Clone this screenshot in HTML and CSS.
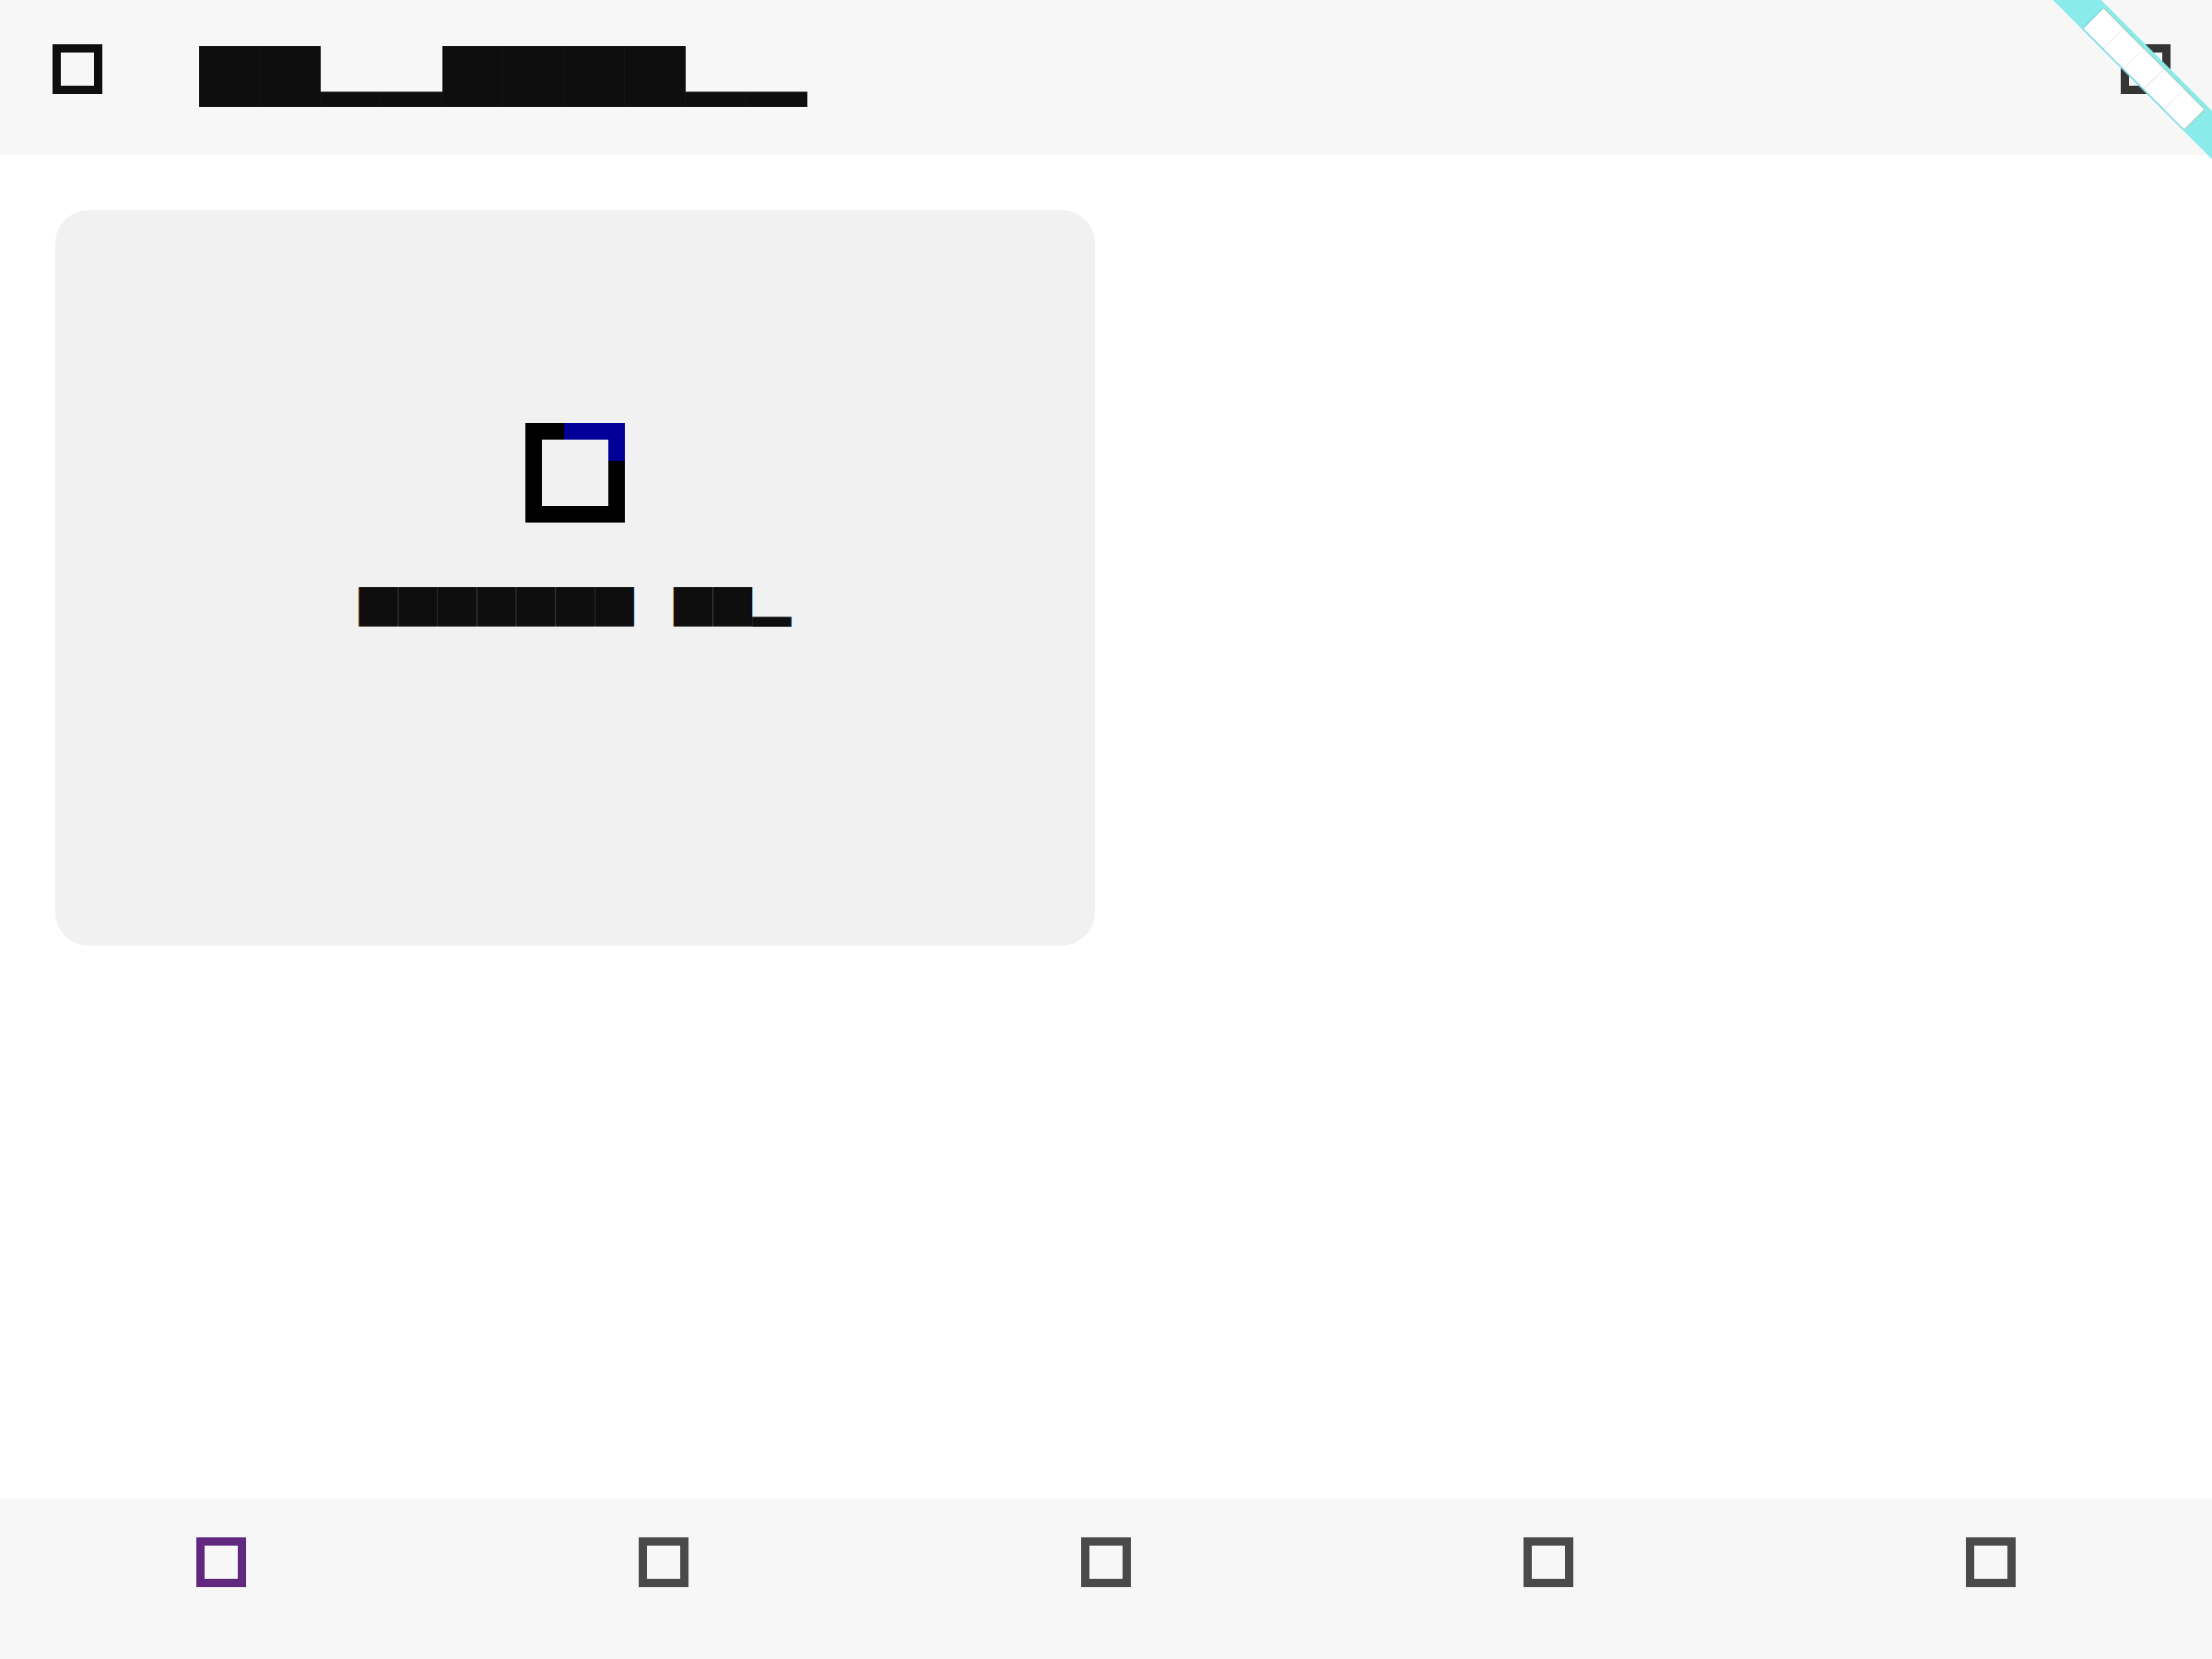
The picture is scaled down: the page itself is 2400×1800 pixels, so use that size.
FILE: index.html
```html
<!DOCTYPE html>
<html lang="en">
<head>
<meta charset="utf-8">
<title>App</title>
<link rel="stylesheet" href="styles.css">
</head>
<body>
<div class="app">
  <header class="appbar">
    <div class="leading"><span class="icon icon-dark"></span></div>
    <h1 class="title blocks">██▂▂████▂▂</h1>
    <div class="actions"><span class="icon icon-action"></span></div>
  </header>
  <main class="body">
    <section class="card">
      <div class="card-icon"></div>
      <p class="card-text blocks">███████　██▂</p>
    </section>
  </main>
  <nav class="bottom-nav">
    <div class="nav-item"><span class="icon icon-active"></span></div>
    <div class="nav-item"><span class="icon icon-muted"></span></div>
    <div class="nav-item"><span class="icon icon-muted"></span></div>
    <div class="nav-item"><span class="icon icon-muted"></span></div>
    <div class="nav-item"><span class="icon icon-muted"></span></div>
  </nav>
  <div class="banner-clip">
    <div class="banner"><span class="banner-text blocks">█████</span></div>
  </div>
</div>
</body>
</html>
```

FILE: styles.css
```css
html, body {
  margin: 0;
  padding: 0;
}
body {
  width: 2400px;
  height: 1800px;
  background: #ffffff;
  font-family: "Noto Sans CJK SC", "DejaVu Sans", sans-serif;
  overflow: hidden;
}
.app {
  position: relative;
  width: 2400px;
  height: 1800px;
  display: flex;
  flex-direction: column;
}
.blocks {
  font-family: "Noto Sans CJK SC", "DejaVu Sans Mono", monospace;
  font-weight: 400;
  white-space: pre;
  line-height: 1;
  margin: 0;
  color: #0e0e0e;
}
.appbar {
  height: 168px;
  flex: 0 0 168px;
  background: #f7f7f7;
  display: flex;
  align-items: flex-start;
}
.leading {
  width: 168px;
  padding-top: 48px;
  display: flex;
  justify-content: center;
}
.title {
  margin-left: 48px;
  margin-top: 46px;
  font-size: 66px;
  height: 66px;
  flex: 1;
}
.actions {
  width: 144px;
  padding-top: 48px;
  display: flex;
  justify-content: center;
}
.icon {
  display: block;
  box-sizing: border-box;
  width: 54px;
  height: 54px;
  border: 9px solid #0e0e0e;
}
.icon-dark { border-color: #0e0e0e; }
.icon-action { border-color: #353535; }
.icon-active { border-color: #622880; }
.icon-muted { border-color: #4a4a4a; }

.body {
  flex: 1;
  padding: 60px;
}
.card {
  box-sizing: border-box;
  width: 1128px;
  height: 798px;
  background: #f1f1f1;
  border-radius: 36px;
  display: flex;
  flex-direction: column;
  align-items: center;
  padding-top: 231px;
}
.card-icon {
  position: relative;
  box-sizing: border-box;
  width: 108px;
  height: 108px;
  border: 18px solid #000000;
}
.card-icon::after {
  content: "";
  position: absolute;
  top: -18px;
  right: -18px;
  width: 66px;
  height: 41px;
  box-sizing: border-box;
  border-top: 18px solid #000099;
  border-right: 18px solid #000099;
}
.card-text {
  margin-top: 68px;
  font-size: 42.7px;
  height: 43px;
}

.bottom-nav {
  flex: 0 0 174px;
  height: 174px;
  background: #f7f7f7;
  display: grid;
  grid-template-columns: repeat(5, 1fr);
}
.nav-item {
  display: flex;
  justify-content: center;
  padding-top: 42px;
}

.banner-clip {
  position: absolute;
  top: 0;
  right: 0;
  width: 240px;
  height: 240px;
  overflow: hidden;
  pointer-events: none;
}
.banner {
  position: absolute;
  left: -33px;
  top: 55px;
  width: 400px;
  height: 37px;
  background: #8aebea;
  transform: rotate(45deg);
  display: flex;
  align-items: center;
  justify-content: center;
}
.banner-text {
  font-size: 31px;
  height: 31px;
  color: #ffffff;
  text-shadow: 0 0 1px #1a5050;
}
```
